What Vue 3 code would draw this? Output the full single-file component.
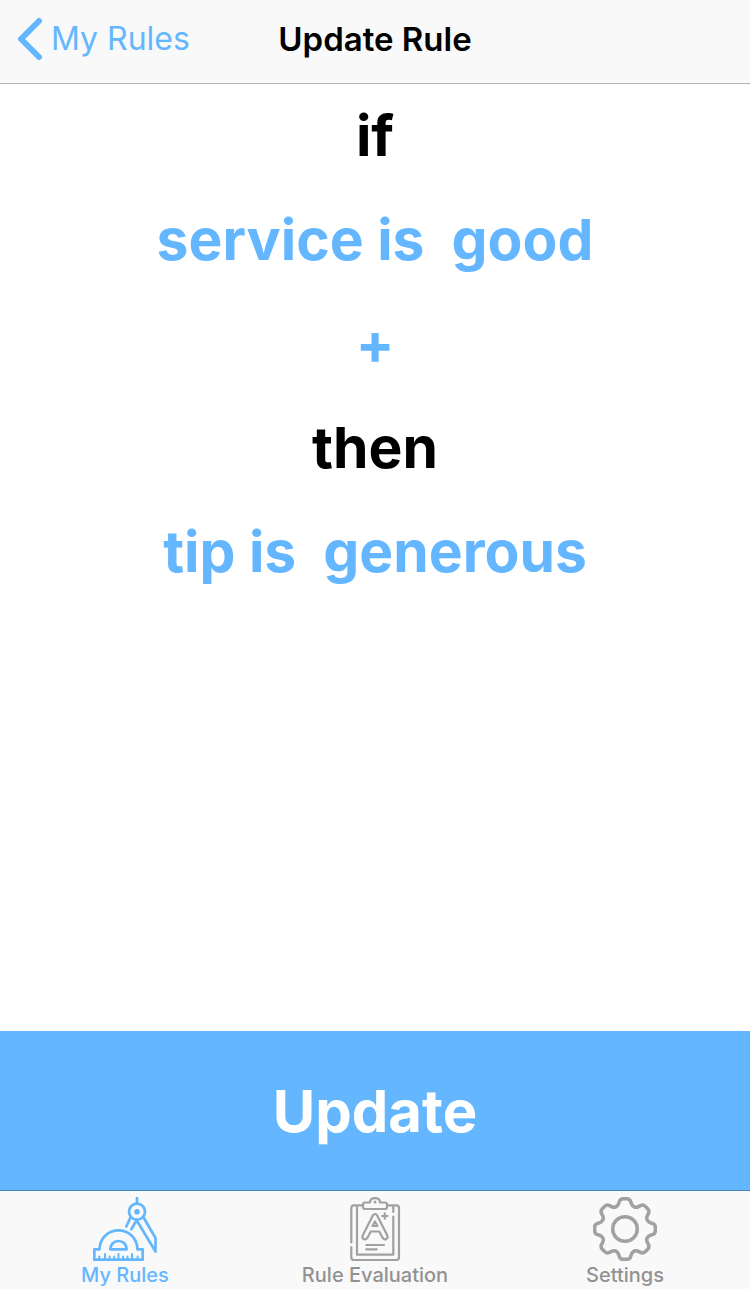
<script setup>
const conditions = ['service is\u00a0 good']
const results = ['tip is\u00a0 generous']

// Eight-toothed gear outline around (31, 32), with rounded corners.
function gearPath() {
  const tooth = [[-7, -23], [-4.8, -30.3], [4.8, -30.3], [7, -23]]
  const radii = [2.5, 3, 3, 2.5]
  const points = []
  for (let k = 0; k < 8; k++) {
    const a = (k * Math.PI) / 4
    for (const [x, y] of tooth) {
      points.push([
        32 + x * Math.cos(a) - y * Math.sin(a),
        32 + x * Math.sin(a) + y * Math.cos(a)
      ])
    }
  }
  const toward = (p, q, r) => {
    const d = Math.hypot(q[0] - p[0], q[1] - p[1])
    return [p[0] + ((q[0] - p[0]) * r) / d, p[1] + ((q[1] - p[1]) * r) / d]
      .map((n) => n.toFixed(2))
      .join(' ')
  }
  return points
    .map((p, i) => {
      const prev = points[(i + points.length - 1) % points.length]
      const next = points[(i + 1) % points.length]
      const r = radii[i % 4]
      const corner = p.map((n) => n.toFixed(2)).join(' ')
      return `${i ? 'L' : 'M'}${toward(p, prev, r)}Q${corner} ${toward(p, next, r)}`
    })
    .join('') + 'Z'
}
const gear = gearPath()
</script>

<template>
  <div class="screen">
    <header class="navbar">
      <a class="back" href="#rules">
        <svg class="chevron" viewBox="0 0 26 44" aria-hidden="true">
          <path d="M23 4 5 22 23 40" />
        </svg>
        <span>My Rules</span>
      </a>
      <h1 class="title">Update Rule</h1>
    </header>

    <main class="rule">
      <h2 class="line keyword">if</h2>
      <button v-for="c in conditions" :key="c" class="line" type="button">{{ c }}</button>
      <button class="line" type="button" aria-label="Add condition">+</button>
      <h2 class="line keyword">then</h2>
      <button v-for="r in results" :key="r" class="line" type="button">{{ r }}</button>
    </main>

    <button class="update" type="button">Update</button>

    <nav class="tabs">
      <a class="tab active" href="#rules">
        <svg class="icon" viewBox="0 0 64 64" aria-hidden="true">
          <path d="M44 1v5" />
          <circle cx="44" cy="14.7" r="8" />
          <circle class="dot" cx="44" cy="14.7" r="2.8" />
          <path d="M37.5 20.5 33.3 29.5M43.5 23.5 38.3 32.3M43.8 23.5 62.5 54.5V41L50.6 20.5" />
          <path d="M1.3 52.3h5.3C6.6 41.5 15 33.3 25.5 33.3S44.400 41.5 44.400 52.3H49.7V62.7H1.3z" />
          <path d="M17.3 52.3c0-5 3.5-8.3 8.2-8.3s8.2 3.3 8.2 8.3z" />
          <path class="fine" d="M6.3 62v-2.5M12 62v-5M16.600 62v-2.5M21.200 62v-2.5M25.5 62v-5M30 62v-2.5M34.500 62v-2.5M39 62v-5M44.600 62v-2.5" />
        </svg>
        <span>My Rules</span>
      </a>
      <a class="tab" href="#evaluation">
        <svg class="icon thin" viewBox="0 0 64 64" aria-hidden="true">
          <path d="M20 8.3H11Q8.3 8.3 8.3 11V45.5M8.3 50V60.5Q8.3 63 11 63H53.3Q56 63 56 60.5V11Q56 8.3 53.3 8.3H44" />
          <path d="M14 9V57.7H50.3V19.5M50.3 15V9" />
          <path d="M22 12H42Q44 12 44 10V7.5Q44 5.500 42 5.500H37C37 2.500 35 1.100 32 1.100S27 2.500 27 5.500H22Q20 5.500 20 7.500V10Q20 12 22 12z" />
          <circle class="dot" cx="32" cy="5" r="1.5" />
          <path d="M29.700 18.700Q32 15.300 34.300 18.700L44.300 38.500C45.700 41.700 41.700 43.700 39.700 41L36.300 34.500H27.700L24.300 41C22.300 43.700 18.300 41.700 19.700 38.500z" />
          <path d="M32 24.5 29.500 29h5z" />
          <path d="M41.800 16.300v5.400M39.100 19h5.400M23.300 48H41M23.300 52.300H33.700" />
        </svg>
        <span>Rule Evaluation</span>
      </a>
      <a class="tab" href="#settings">
        <svg class="icon gear" viewBox="0 0 64 64" aria-hidden="true">
          <path :d="gear" />
          <circle cx="32" cy="32" r="12.3" />
        </svg>
        <span>Settings</span>
      </a>
    </nav>
  </div>
</template>

<style>
body {
  margin: 0;
  background: #fff;
}
</style>

<style scoped>
.screen {
  display: flex;
  flex-direction: column;
  min-height: 100vh;
  font-family: Inter, "Liberation Sans", sans-serif;
  color: #000;
}
.navbar {
  display: grid;
  grid-template-columns: 1fr auto 1fr;
  align-items: center;
  padding: 17px 16px 22px;
  border-bottom: 1px solid #b2b2b2;
  background: #f9f9f9;
}
.back {
  display: flex;
  align-items: center;
  gap: 9px;
  color: #64b7ff;
  font-size: 32px;
  line-height: 44px;
  text-decoration: none;
}
.chevron {
  width: 26px;
  height: 44px;
  fill: none;
  stroke: currentColor;
  stroke-width: 6;
  stroke-linecap: round;
  stroke-linejoin: round;
}
.title {
  margin: 0;
  font-size: 33px;
  font-weight: 600;
  line-height: 44px;
}
.rule {
  flex: 1;
  display: flex;
  flex-direction: column;
  align-items: center;
}
.line {
  margin: 0;
  padding: 0;
  border: 0;
  background: none;
  color: #64b7ff;
  font-family: inherit;
  font-size: 57px;
  font-weight: 700;
  line-height: 104px;
}
.keyword {
  color: #000;
}
.update {
  padding: 1px 0 0;
  border: 0;
  background: #64b7ff;
  color: #fff;
  font-family: inherit;
  font-size: 58px;
  font-weight: 700;
  line-height: 158px;
}
.tabs {
  display: grid;
  grid-template-columns: repeat(3, 1fr);
  border-top: 1px solid #4784b9;
  background: #f9f9f9;
}
.tab {
  display: flex;
  flex-direction: column;
  align-items: center;
  padding-top: 6px;
  color: #929292;
  font-size: 20px;
  font-weight: 500;
  line-height: 28px;
  text-decoration: none;
}
.active {
  color: #64b7ff;
}
.icon {
  width: 64px;
  height: 64px;
  fill: none;
  stroke: currentColor;
  stroke-width: 2.7;
  stroke-linecap: round;
  stroke-linejoin: round;
}
.tab:not(.active) .icon {
  color: #a1a1a1;
}
.icon.thin {
  stroke-width: 2.2;
}
.icon.gear {
  stroke-width: 3.5;
}
.dot {
  fill: currentColor;
  stroke: none;
}
.fine {
  stroke-width: 2;
}
</style>
